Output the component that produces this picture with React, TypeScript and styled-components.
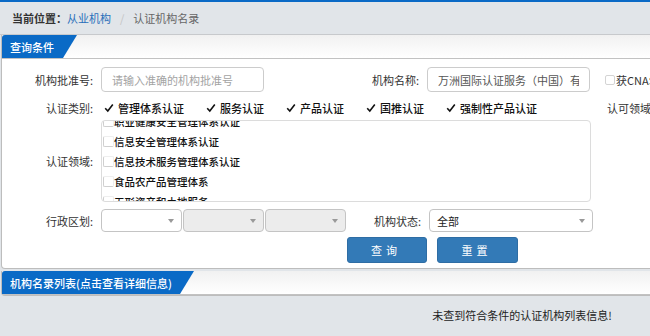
import { useEffect, useRef } from "react";
import styled, { createGlobalStyle } from "styled-components";

const GlobalStyle = createGlobalStyle`
    html, body {
        margin: 0;
        padding: 0;
        background: #e1e5e9;
        overflow: hidden;
    }
    body {
        font-family: "Noto Sans CJK SC", "Noto Sans", "Liberation Sans", sans-serif;
        font-size: 11px;
        color: #333;
    }
    * {
        box-sizing: border-box;
    }
`

const StyledPage = styled.div`
    width: 1044px;
    border-top: 2px solid #0a6ac6;
`

const StyledBreadcrumb = styled.div`
    display: flex;
    align-items: center;
    height: 33px;
    padding-left: 12px;
    border-bottom: 1px solid #c7c9cc;
    font-size: 11px;
`

const StyledCrumbLabel = styled.span`
    font-weight: 700;
    color: #333;
`

const StyledCrumbLink = styled.a`
    color: #2a6fba;
    text-decoration: none;
`

const StyledCrumbSep = styled.span`
    color: #c4c4c4;
    margin: 0 9px;
`

const StyledCrumbCurrent = styled.span`
    color: #666;
`

const StyledPanel = styled.div`
    margin: 0 0 2px 1px;
    background: #fff;
    border: 1px solid #bdbdbd;
    border-top: none;
    border-radius: 0 0 4px 4px;
`

const StyledPanelHeader = styled.div`
    height: 24px;
    background: linear-gradient(to bottom, #f1f1f1, #ffffff);
    border-bottom: 1px solid #c2c2c2;
`

const StyledTab = styled.div<{ $width: number }>`
    display: flex;
    align-items: center;
    width: ${({ $width }) => $width}px;
    height: 100%;
    padding-left: 8px;
    background: #0a6ac6;
    color: #fff;
    font-size: 11px;
    font-weight: 500;
    border-top-left-radius: 3px;
    clip-path: polygon(0 0, 100% 0, calc(100% - 14px) 100%, 0 100%);
`

const StyledForm = styled.div`
    display: flex;
    flex-direction: column;
    padding: 8px 0 5px 0;
`

const StyledRow = styled.div<{ $height: number; $gap?: number }>`
    display: flex;
    align-items: center;
    height: ${({ $height }) => $height}px;
    margin-bottom: ${({ $gap }) => $gap ?? 0}px;
`

const StyledLabel = styled.label<{ $width: number }>`
    flex: none;
    width: ${({ $width }) => $width}px;
    margin-right: 8px;
    text-align: right;
    color: #333;
`

const StyledInput = styled.input`
    flex: none;
    width: 163px;
    height: 25px;
    padding: 0 10px;
    border: 1px solid #ccc;
    border-radius: 4px;
    font-family: inherit;
    font-size: 11px;
    color: #555;
    outline: none;

    &::placeholder {
        color: #a3a3a3;
    }
`

const StyledSmallCheck = styled.span`
    display: inline-flex;
    align-items: center;
    margin-left: 15px;
    color: #333;
    white-space: nowrap;

    &::before {
        content: "";
        width: 8px;
        height: 8px;
        margin-right: 1px;
        border: 1px solid #d4d4d4;
        border-radius: 2px;
    }
`

const StyledCheckGroup = styled.div`
    display: flex;
    align-items: center;
    width: 506px;
    padding-left: 3px;
`

const StyledCheckItem = styled.span`
    display: inline-flex;
    align-items: center;
    margin-right: 22px;
    color: #111;
    font-weight: 500;
    white-space: nowrap;

    svg {
        margin-right: 4px;
    }
`

const StyledSideLabel = styled.span`
    color: #333;
    white-space: nowrap;
`

const StyledListBox = styled.div`
    width: 490px;
    height: 82px;
    border: 1px solid #dcdcdc;
    border-radius: 4px;
    overflow: hidden;
`

const StyledListItem = styled.div`
    display: flex;
    align-items: center;
    height: 20px;
    padding-left: 1px;
    color: #111;
    font-size: 10.5px;
    font-weight: 500;
    white-space: nowrap;

    &::before {
        content: "";
        width: 9px;
        height: 9px;
        border: 1px solid #cfcfcf;
        border-radius: 2px;
        border-top-color: #eee;
        border-right-color: #eee;
    }
`

const StyledSelect = styled.div<{ $width: number; $disabled?: boolean }>`
    display: flex;
    align-items: center;
    flex: none;
    width: ${({ $width }) => $width}px;
    height: 23px;
    margin-right: 1px;
    padding: 0 7px;
    border: 1px solid #c4c4c4;
    border-radius: 4px;
    background: ${({ $disabled }) => $disabled ? "#ececec" : "#fff"};
    color: #222;

    &::after {
        content: "";
        margin-left: auto;
        border-left: 3px solid transparent;
        border-right: 3px solid transparent;
        border-top: 4px solid #999;
    }
`

const StyledButtons = styled.div`
    display: flex;
    gap: 10px;
    padding-left: 345px;
`

const StyledButton = styled.button<{ $width: number }>`
    width: ${({ $width }) => $width}px;
    height: 26px;
    border: 1px solid #2e6da4;
    border-radius: 3px;
    background: #337ab7;
    color: #fff;
    font-family: inherit;
    font-size: 11px;
    letter-spacing: 4px;
    padding-left: 4px;
    cursor: pointer;
`

const StyledEmpty = styled.div`
    padding-top: 9px;
    text-align: center;
    color: #222;
`

const Check = () => (
    <svg width="10" height="10" viewBox="0 0 10 10">
        <path d="M1.2 5.2 L3.8 8 L8.8 1.5" fill="none" stroke="#111" strokeWidth="1.6" />
    </svg>
)

const categories = ["管理体系认证", "服务认证", "产品认证", "国推认证", "强制性产品认证"];

const fields = [
    "质量管理体系认证",
    "环境管理体系认证",
    "职业健康安全管理体系认证",
    "信息安全管理体系认证",
    "信息技术服务管理体系认证",
    "食品农产品管理体系",
    "无形资产和土地服务",
    "能源管理体系认证",
];

const App = () => {
    const listRef = useRef<HTMLDivElement>(null);

    useEffect(() => {
        if (listRef.current) {
            listRef.current.scrollTop = 50;
        }
    }, []);

    return (
        <>
            <GlobalStyle />
            <StyledPage>
                <StyledBreadcrumb>
                    <StyledCrumbLabel>当前位置：</StyledCrumbLabel>
                    <StyledCrumbLink href="#">从业机构</StyledCrumbLink>
                    <StyledCrumbSep>/</StyledCrumbSep>
                    <StyledCrumbCurrent>认证机构名录</StyledCrumbCurrent>
                </StyledBreadcrumb>

                <StyledPanel>
                    <StyledPanelHeader>
                        <StyledTab $width={75}>查询条件</StyledTab>
                    </StyledPanelHeader>
                    <StyledForm>
                        <StyledRow $height={25} $gap={7}>
                            <StyledLabel $width={91}>机构批准号:</StyledLabel>
                            <StyledInput placeholder="请输入准确的机构批准号" />
                            <StyledLabel $width={155}>机构名称:</StyledLabel>
                            <StyledInput defaultValue="万洲国际认证服务（中国）有限公司" />
                            <StyledSmallCheck>获CNAS认可</StyledSmallCheck>
                        </StyledRow>
                        <StyledRow $height={17} $gap={4}>
                            <StyledLabel $width={91}>认证类别:</StyledLabel>
                            <StyledCheckGroup>
                                {categories.map((item) => (
                                    <StyledCheckItem key={item}>
                                        <Check />
                                        {item}
                                    </StyledCheckItem>
                                ))}
                            </StyledCheckGroup>
                            <StyledSideLabel>认可领域:</StyledSideLabel>
                        </StyledRow>
                        <StyledRow $height={82} $gap={7}>
                            <StyledLabel $width={91}>认证领域:</StyledLabel>
                            <StyledListBox ref={listRef}>
                                {fields.map((item) => (
                                    <StyledListItem key={item}>{item}</StyledListItem>
                                ))}
                            </StyledListBox>
                        </StyledRow>
                        <StyledRow $height={23} $gap={5}>
                            <StyledLabel $width={91}>行政区划:</StyledLabel>
                            <StyledSelect $width={81} />
                            <StyledSelect $width={81} $disabled />
                            <StyledSelect $width={81} $disabled />
                            <StyledLabel $width={74}>机构状态:</StyledLabel>
                            <StyledSelect $width={164}>全部</StyledSelect>
                        </StyledRow>
                        <StyledButtons>
                            <StyledButton $width={80}>查询</StyledButton>
                            <StyledButton $width={81}>重置</StyledButton>
                        </StyledButtons>
                    </StyledForm>
                </StyledPanel>

                <StyledPanel>
                    <StyledPanelHeader>
                        <StyledTab $width={192}>机构名录列表(点击查看详细信息)</StyledTab>
                    </StyledPanelHeader>
                </StyledPanel>

                <StyledEmpty>未查到符合条件的认证机构列表信息!</StyledEmpty>
            </StyledPage>
        </>
    );
};

export default App;
